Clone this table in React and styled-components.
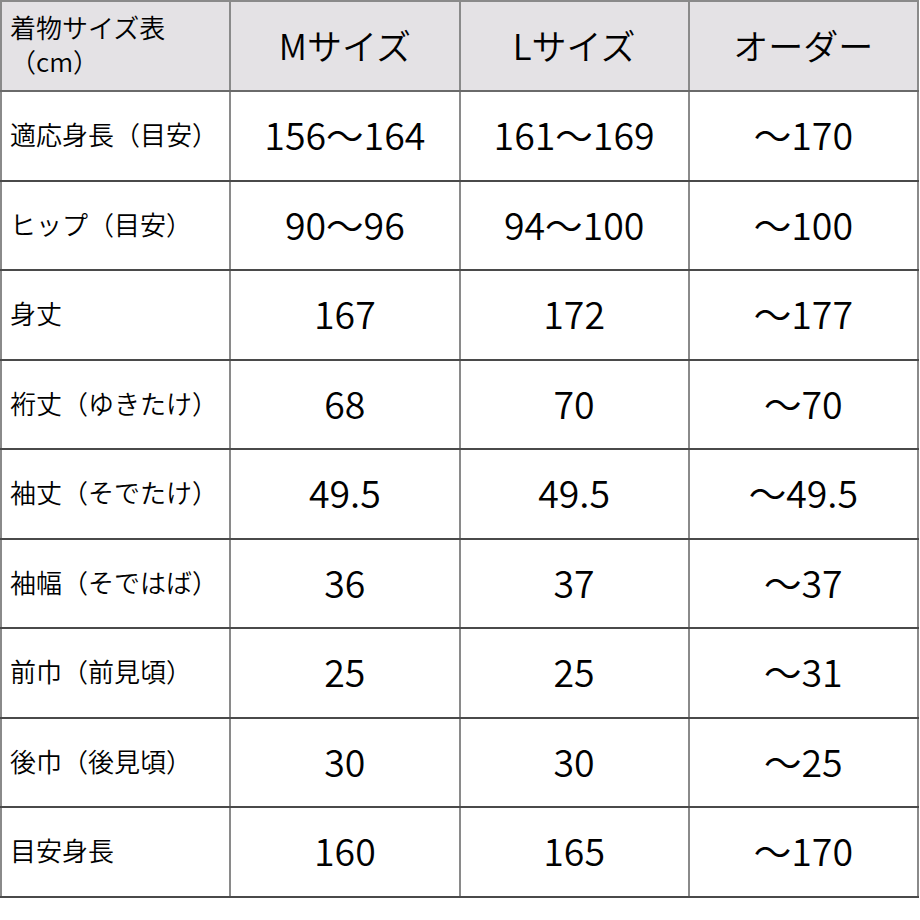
import styled, { createGlobalStyle } from 'styled-components';

const rows = [
  ['適応身長（目安）', '156〜164', '161〜169', '〜170'],
  ['ヒップ（目安）', '90〜96', '94〜100', '〜100'],
  ['身丈', '167', '172', '〜177'],
  ['裄丈（ゆきたけ）', '68', '70', '〜70'],
  ['袖丈（そでたけ）', '49.5', '49.5', '〜49.5'],
  ['袖幅（そではば）', '36', '37', '〜37'],
  ['前巾（前見頃）', '25', '25', '〜31'],
  ['後巾（後見頃）', '30', '30', '〜25'],
  ['目安身長', '160', '165', '〜170'],
];

const GlobalStyle = createGlobalStyle`
  body {
    margin: 0;
    background: #fff;
    font-family: "Noto Sans CJK JP", "Noto Sans", sans-serif;
    font-weight: 350;
    color: #000;
  }
`;

const Table = styled.table`
  width: 919px;
  border-collapse: collapse;
  table-layout: fixed;
`;

const HeadRow = styled.tr`
  height: 90px;
  background: #e4e2e5;
`;

const Row = styled.tr`
  height: 89.5px;
`;

const Cell = styled.td`
  border-left: 2px solid #8a8a8a;
  border-right: 2px solid #8a8a8a;
  border-top: 2px solid #4a4a4a;
  border-bottom: 2px solid #4a4a4a;
  padding: 0 0 4px;
  text-align: center;
  vertical-align: middle;
  font-size: 37.5px;
  font-weight: 350;
`;

const HeadCell = styled(Cell).attrs({ as: 'th' })`
  font-weight: 350;
  font-size: 35px;
  border-top-color: #8a8a8a;
  border-bottom-color: #6a6a6a;
`;

const CornerCell = styled(HeadCell)`
  text-align: left;
  vertical-align: top;
  font-size: 26px;
  line-height: 34px;
  padding: 8px 0 0 8px;
`;

const Label = styled(Cell)`
  text-align: left;
  font-size: 26px;
  padding-left: 8px;
`;

export default function App() {
  return (
    <>
      <GlobalStyle />
      <Table>
        <thead>
          <HeadRow>
            <CornerCell>
              着物サイズ表
              <br />
              （cm）
            </CornerCell>
            <HeadCell>Mサイズ</HeadCell>
            <HeadCell>Lサイズ</HeadCell>
            <HeadCell>オーダー</HeadCell>
          </HeadRow>
        </thead>
        <tbody>
          {rows.map(([label, m, l, o]) => (
            <Row key={label}>
              <Label>{label}</Label>
              <Cell>{m}</Cell>
              <Cell>{l}</Cell>
              <Cell>{o}</Cell>
            </Row>
          ))}
        </tbody>
      </Table>
    </>
  );
}
